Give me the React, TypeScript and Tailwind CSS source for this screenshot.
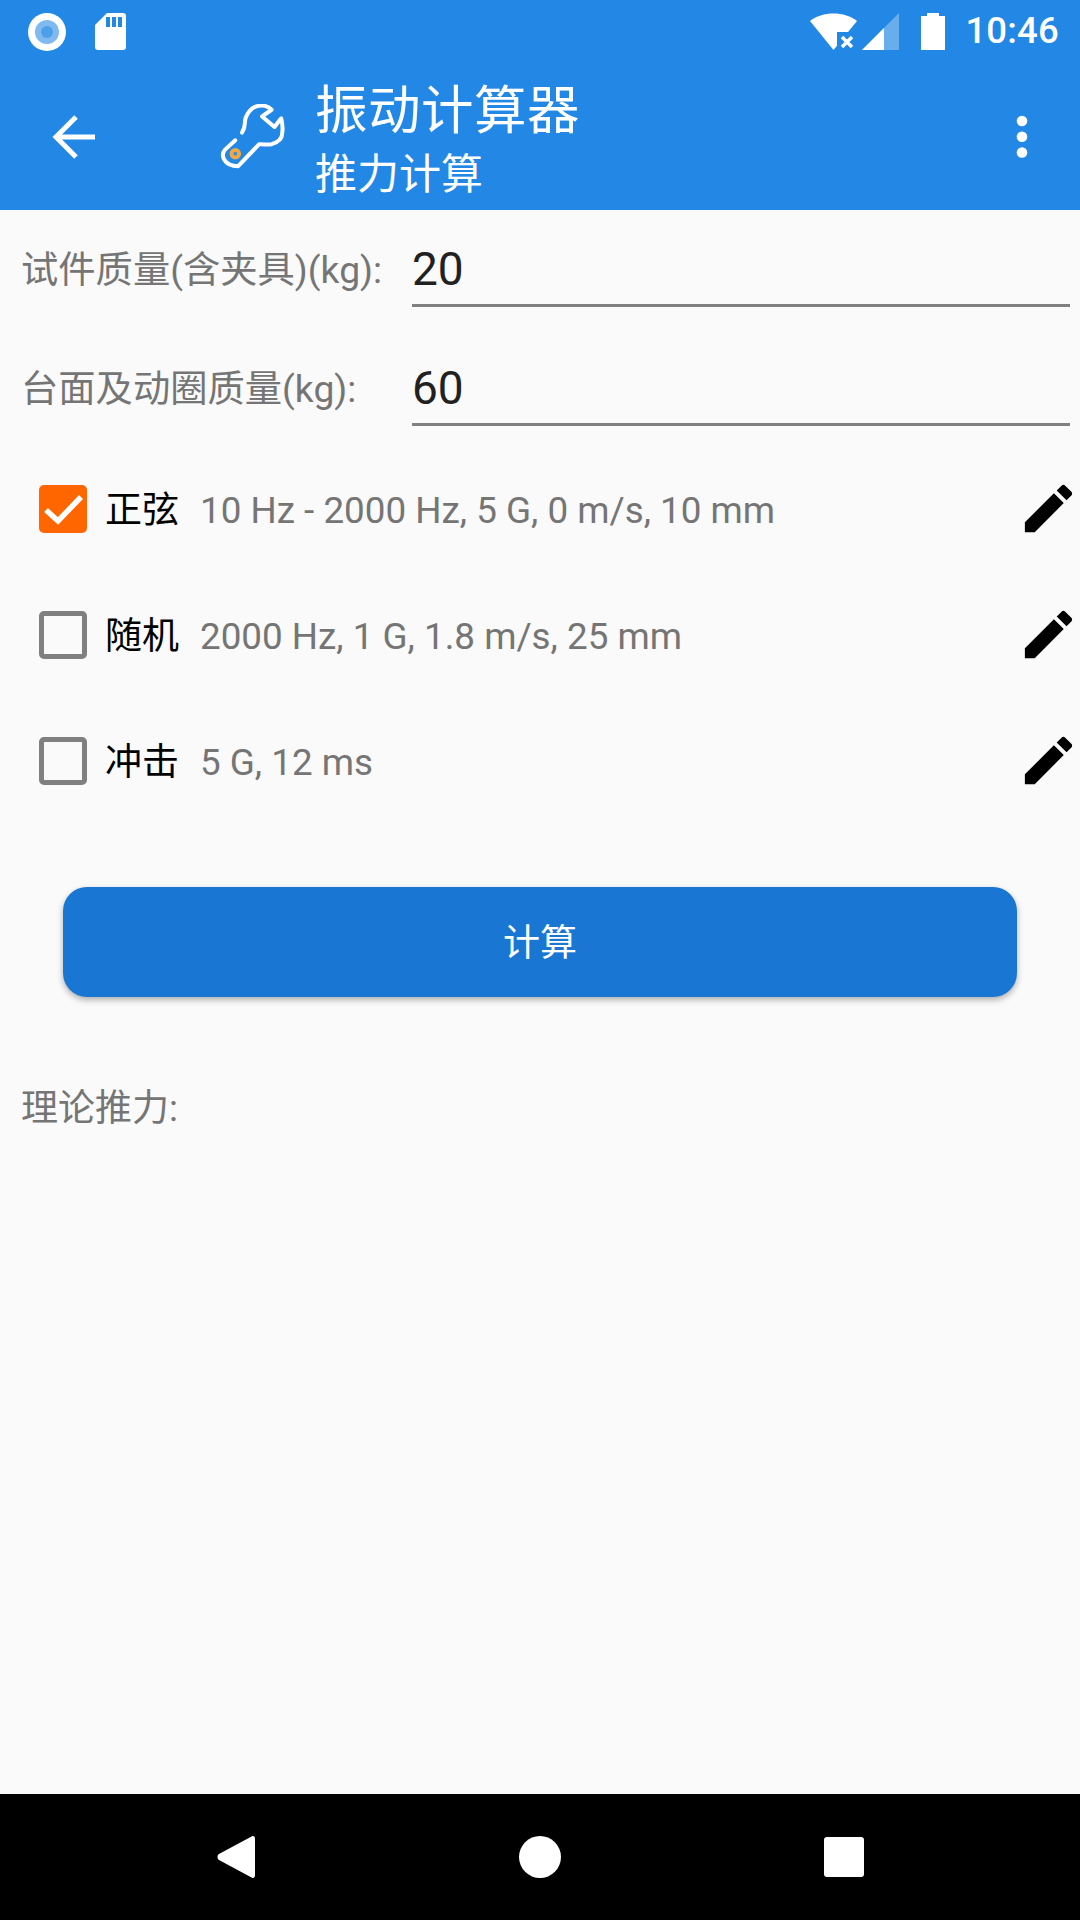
const font = "font-['Roboto','Noto_Sans_CJK_SC',sans-serif]"

function PencilIcon() {
  return (
    <svg className="mb-[5px]" width="63" height="63" viewBox="0 0 24 24" fill="#000">
      <path d="M3 17.25V21h3.75L17.81 9.94l-3.75-3.75L3 17.25zM20.71 7.04c.39-.39.39-1.02 0-1.41l-2.34-2.34c-.39-.39-1.02-.39-1.41 0l-1.83 1.83 3.75 3.75 1.83-1.83z" />
    </svg>
  )
}

function Checkbox({ checked }: { checked: boolean }) {
  if (checked) {
    return (
      <div className="mb-[5px] w-[48px] h-[48px] rounded-[5px] bg-[#ff6600] flex items-center justify-center">
        <svg width="48" height="48" viewBox="0 0 48 48" fill="none" stroke="#fff" strokeWidth="5.5">
          <path d="M7 25 L19 36 L42 12" />
        </svg>
      </div>
    )
  }
  return <div className="mb-[5px] w-[48px] h-[48px] rounded-[5px] border-[5px] border-[#808080]" />
}

function FieldRow({ label, value }: { label: string; value: string }) {
  return (
    <div className="flex items-end h-[75px] pl-[21px] pr-[10px]">
      <div className="w-[391px] h-[75px] pt-[3px] flex items-center text-[37.3px] text-[#757575] whitespace-nowrap">{label}</div>
      <div className="flex-1 h-[75px] pt-[3px] border-b-[3px] border-[#808080] flex items-center text-[46px] text-[#212121]">{value}</div>
    </div>
  )
}

function OptionRow({ name, detail, checked }: { name: string; detail: string; checked: boolean }) {
  return (
    <div className="flex items-center h-[126px] pl-[39px]">
      <Checkbox checked={checked} />
      <div className="ml-[18px] w-[95px] text-[37px] text-black whitespace-nowrap">{name}</div>
      <div className="flex-1 text-[36.8px] text-[#757575] whitespace-nowrap">{detail}</div>
      <PencilIcon />
    </div>
  )
}

export default function App() {
  return (
    <div className={`w-[1080px] h-[1920px] flex flex-col bg-[#fafafa] overflow-hidden ${font}`}>
      <div className="h-[210px] bg-[#2387e5] text-white flex flex-col">
        <div className="h-[63px] flex items-center pl-[28px] pr-[21px]">
          <svg width="38" height="38" viewBox="0 0 38 38">
            <circle cx="19" cy="19" r="19" fill="#fff" />
            <circle cx="19" cy="19" r="12" fill="#7fb9f0" />
            <circle cx="19" cy="19" r="6" fill="#4e9fea" />
          </svg>
          <svg className="ml-[29px]" width="31" height="37" viewBox="0 0 31 37">
            <path d="M12 0H28a3 3 0 0 1 3 3V34a3 3 0 0 1-3 3H3a3 3 0 0 1-3-3V12Z" fill="#fff" />
            <path d="M11 4h4v10h-4zM17 4h4v10h-4zM23 4h4v10h-4z" fill="#2387e5" />
          </svg>
          <div className="flex-1" />
          <svg width="47" height="37" viewBox="0 0 47 37">
            <path d="M0 8 C12 -2 35 -2 47 8 L23.500 37 Z" fill="#fff" />
            <rect x="27" y="19" width="20" height="18" fill="#2387e5" />
            <path d="M32 24 L42 34 M42 24 L32 34" stroke="#fff" strokeWidth="3.5" />
          </svg>
          <svg className="ml-[5px]" width="37" height="37" viewBox="0 0 37 37">
            <path d="M0 37 L37 0 V37 Z" fill="#68aeed" />
            <path d="M0 37 L22 15 V37 Z" fill="#fff" />
          </svg>
          <svg className="ml-[22px]" width="24" height="37" viewBox="0 0 24 37">
            <path d="M6 0H18V3H24V37H0V3H6Z" fill="#fff" />
          </svg>
          <span className="ml-[20px] text-[36.5px] font-medium leading-none tracking-[0.2px]">10:46</span>
        </div>
        <div className="h-[147px] flex items-center">
          <svg className="ml-[50px]" width="52" height="52" viewBox="0 0 52 52" fill="none" stroke="#fff" strokeWidth="5">
            <path d="M45 26 H6 M26 6 L6 26 L26 46" />
          </svg>
          <svg className="ml-[118px]" width="65" height="65" viewBox="0 0 68 68" fill="none">
            <path d="M16 38 L5 48 C1 53 3 65 19 65 L41 42 C43 42 48 43 54 42 C60 40 65 36 65 31 C66 25 65 19 64 15 L57 24 L44 13 L54 6 C50 2 44 1 40 2 C33 3 26 11 26 20 C26 24 25 27 23 30" stroke="#fff" strokeWidth="4.2" strokeLinecap="round" strokeLinejoin="round" />
            <circle cx="16" cy="52" r="4" fill="#3b8fdc" stroke="#f5a83c" strokeWidth="4" />
          </svg>
          <div className="ml-[30px] pt-[6px] flex flex-col">
            <div className="text-[52.5px] leading-[62px] tracking-[0.5px] whitespace-nowrap">振动计算器</div>
            <div className="mt-[8px] text-[42px] leading-[50px] whitespace-nowrap">推力计算</div>
          </div>
          <div className="flex-1" />
          <svg className="mr-[48px]" width="20" height="44" viewBox="0 0 20 44" fill="#fff">
            <circle cx="10" cy="6" r="5.3" />
            <circle cx="10" cy="21.700" r="5.3" />
            <circle cx="10" cy="37.500" r="5.3" />
          </svg>
        </div>
      </div>

      <div className="pt-[22px] flex flex-col gap-[44px]">
        <FieldRow label="试件质量(含夹具)(kg):" value="20" />
        <FieldRow label="台面及动圈质量(kg):" value="60" />
      </div>

      <div className="mt-[22px]">
        <OptionRow checked name="正弦" detail="10 Hz - 2000 Hz, 5 G, 0 m/s, 10 mm" />
        <OptionRow checked={false} name="随机" detail="2000 Hz, 1 G, 1.8 m/s, 25 mm" />
        <OptionRow checked={false} name="冲击" detail="5 G, 12 ms" />
      </div>

      <button className="mt-[61px] mx-[63px] h-[110px] pt-[3px] rounded-[24px] bg-[#1976d2] text-white text-[37px] shadow-[0_3px_6px_rgba(0,0,0,0.3)]">
        计算
      </button>

      <div className="mt-[88px] pl-[21px] h-[48px] flex items-center text-[37px] text-[#757575]">理论推力:</div>

      <div className="flex-1" />

      <div className="h-[126px] bg-black flex items-center pl-[217px]">
        <svg width="38" height="42" viewBox="0 0 38 42" fill="#fff">
          <path d="M35 0.300 C37 -0.500 38 1 38 3 V39 C38 41 37 42.500 35 41.700 L2 24 C0 23 0 19 2 18 Z" />
        </svg>
        <div className="ml-[264px] w-[42px] h-[42px] rounded-full bg-white" />
        <div className="ml-[263px] w-[40px] h-[40px] rounded-[3px] bg-white" />
      </div>
    </div>
  )
}
